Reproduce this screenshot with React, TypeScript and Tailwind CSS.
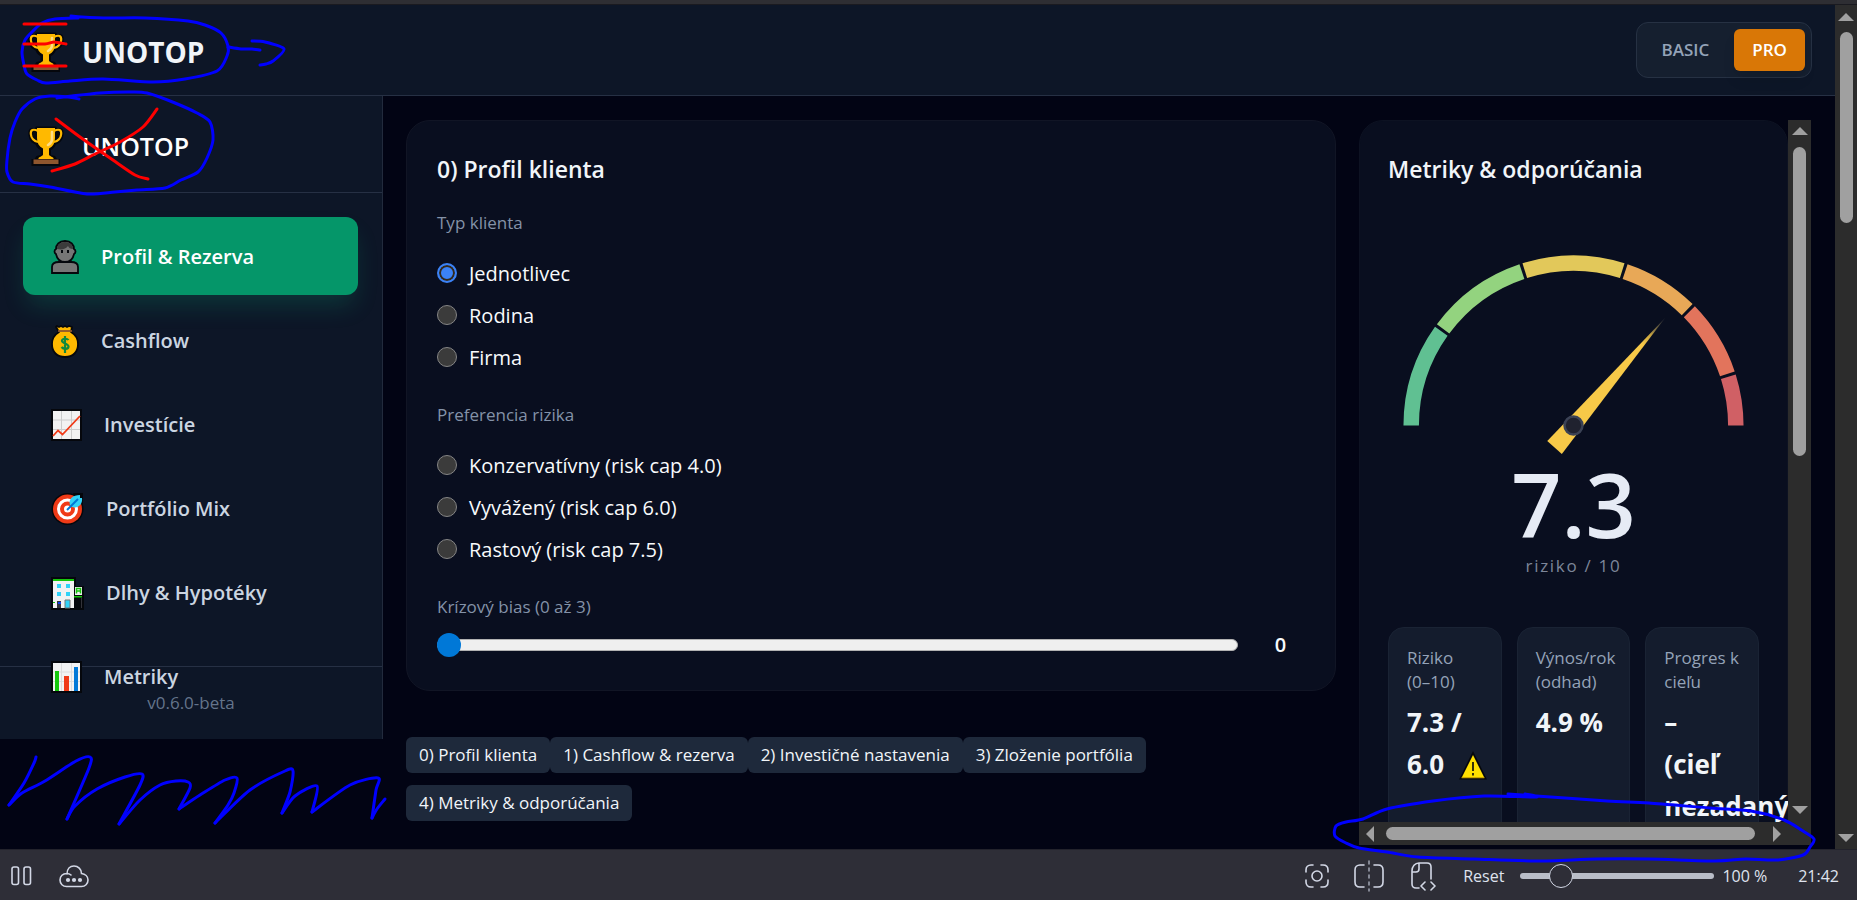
import { useState, type ReactNode } from "react";

/* ---------- emoji-style pictograms ---------- */

function Trophy() {
  return (
    <svg width="36" height="40" viewBox="0 0 36 40" aria-hidden="true" className="shrink-0">
      <path
        d="M8 .5h20l1 1.500h3c3 0 4 3 3.500 7-.5 5-3.500 8-7.500 9.500-1.500 3-3 4.500-5 5.500v5l4 1 2 3h3v7H3.500v-7h3l2-3 4-1v-5c-2-1-4-2.500-5-5.500C3.500 17 1 14 .5 9 0 5 1 2 4 2h3z"
        fill="#05070c"
      />
      <path d="M10 5C5 2.500 2.500 4 2.800 8c.3 4 3.200 7.500 7.200 8M26 5c5-2.500 7.500-1 7.200 3-.3 4-3.200 7.500-7.200 8" fill="none" stroke="#ffb900" strokeWidth="2.200" />
      <path d="M9 2h18v10c0 5-2 8.500-6 10.500v6c0 1.500 3 2 4.500 3.500V33h-15v-1c1.500-1.500 4.500-2 4.500-3.500v-6C11 20.500 9 17 9 12z" fill="#ffb900" />
      <path d="M24 6v7c0 3-1.500 4.500-4 6" fill="none" stroke="#ffdc83" strokeWidth="2.600" strokeLinecap="round" />
      <path d="M5.500 33.500h25V38h-25z" fill="#8e562e" />
    </svg>
  );
}

function Person() {
  return (
    <svg width="28" height="34" viewBox="0 0 28 34" aria-hidden="true" className="shrink-0">
      <path
        d="M1 33v-6c0-4 3-5 7-5h12c4 0 7 1 7 5v6z"
        fill="#767676"
        stroke="#05070c"
        strokeWidth="1.8"
      />
      <path
        d="M14 1C8 1 5 5 5 9c-2 1-2 4 0 5 1 5 4 8 9 8s8-3 9-8c2-1 2-4 0-5 0-4-3-8-9-8z"
        fill="#767676"
        stroke="#05070c"
        strokeWidth="1.8"
      />
      <path d="M6 9c0-4 3-7 8-7s8 3 8 7c-3 0-4-1-5-3-2 3-6 4-11 3z" fill="#3b3b3b" />
      <path d="M11 10v3M17 10v3" stroke="#05070c" strokeWidth="2" />
    </svg>
  );
}

function MoneyBag() {
  return (
    <svg width="28" height="34" viewBox="0 0 28 34" aria-hidden="true" className="shrink-0">
      <path
        d="M6 2l2 1 2-1 2 1 2-1 2 1 2-1 3 1-1 5c5 3 7 7 7 12 0 8-5 13-13 13S1 28 1 20C1 15 3 11 8 8L5 3z"
        fill="#ffb900"
        stroke="#05070c"
        strokeWidth="1.8"
        strokeLinejoin="round"
      />
      <path d="M7 7h14" stroke="#8e562e" strokeWidth="1.8" />
      <path
        d="M17.500 16c-1-1.500-6-2-6.500.5-.5 3 6.500 3 6.500 6s-5 3-7 .5M14 12v17"
        fill="none"
        stroke="#10893e"
        strokeWidth="2.2"
      />
    </svg>
  );
}

function LineChart() {
  return (
    <svg width="31" height="32" viewBox="0 0 31 32" aria-hidden="true" className="shrink-0">
      <path d="M0 0h31v32H0z" fill="#05070c" />
      <path d="M2 2h27v28H2z" fill="#f2f2f2" />
      <path d="M10.500 2v28M20.500 2v28M2 11h27M2 20.500h27" stroke="#cccccc" strokeWidth="1" />
      <path d="M2 27l5-5.500 4.500 4L29 7" fill="none" stroke="#f03a17" strokeWidth="1.8" />
    </svg>
  );
}

function Target() {
  return (
    <svg width="33" height="34" viewBox="0 0 33 34" aria-hidden="true" className="shrink-0">
      <circle cx="16.500" cy="17" r="16" fill="#05070c" />
      <path d="M22 1h10v11l-6 4z" fill="#05070c" />
      <circle cx="16.500" cy="17" r="14.500" fill="#f03a17" />
      <circle cx="16.500" cy="17" r="9" fill="none" stroke="#ffffff" strokeWidth="3" />
      <circle cx="16.500" cy="17" r="3.500" fill="#ffffff" />
      <path d="M19 13c-2-6 3-10 10-10v3h2c1 6-4 11-10 9z" fill="#31d2f7" />
      <path d="M16 18L27 7" stroke="#0078d7" strokeWidth="2" />
    </svg>
  );
}

function Bank() {
  return (
    <svg width="33" height="34" viewBox="0 0 33 34" aria-hidden="true" className="shrink-0">
      <path d="M0 1h25v9h8v24H0z" fill="#05070c" />
      <path d="M2 5h21v27H2z" fill="#f2f2f2" />
      <path d="M2 3h21v2H2z" fill="#16c60c" />
      <path d="M6 8h4v4H6zM15 8h4v4h-4zM6 16h4v4H6zM15 16h4v4h-4z" fill="#31d2f7" />
      <path d="M14 24h5v8h-5z" fill="#31d2f7" stroke="#767676" />
      <path d="M6 25h4v7H6z" fill="#33333a" />
      <path d="M7 26h3v2H7z" fill="#0c3fe8" />
      <path d="M2 26h2v1H2z" fill="#16c60c" />
      <path d="M24 11h7v8h-7z" fill="#f2f2f2" />
      <path d="M25.500 17.500v-5h4v5M25.500 15h4" fill="none" stroke="#16c60c" strokeWidth="1.5" />
      <path d="M23 20h8v1.500h-8z" fill="#16c60c" />
      <path d="M30.500 22v10" stroke="#33333a" strokeWidth="1" />
    </svg>
  );
}

function BarChart() {
  return (
    <svg width="31" height="32" viewBox="0 0 31 32" aria-hidden="true" className="shrink-0">
      <path d="M0 0h31v32H0z" fill="#05070c" />
      <path d="M2 2h27v28H2z" fill="#f2f2f2" />
      <path d="M10.500 2v28M20.500 2v28M2 11h27M2 20.500h27" stroke="#dcdcdc" strokeWidth="1" />
      <path d="M4 10h4v20H4z" fill="#16c60c" />
      <path d="M13 15h5v15h-5z" fill="#f03a17" />
      <path d="M23 6h4v24h-4z" fill="#0078d7" />
    </svg>
  );
}

function Warning() {
  return (
    <svg width="28" height="29" viewBox="0 0 28 29" role="img" aria-label="Varovanie" className="ml-2 inline-block align-[-6px]">
      <path d="M14 0L28 28.500H0z" fill="#05070c" />
      <path d="M14 4L25.500 27h-23z" fill="#ffe000" />
      <path d="M3 26h22l.5 1.200h-23z" fill="#c9a500" />
      <path d="M14 11v9M14 22v2.500" stroke="#05070c" strokeWidth="1.600" />
    </svg>
  );
}

/* ---------- scrollbars ---------- */

function Arrow({ dir }: { dir: "up" | "down" | "left" | "right" }) {
  const shapes = {
    up: "M0 8L8 0l8 8z",
    down: "M0 0h16L8 8z",
    left: "M8 0v16L0 8z",
    right: "M0 0l8 8-8 8z",
  };
  const vertical = dir === "up" || dir === "down";
  return (
    <svg width={vertical ? 16 : 8} height={vertical ? 8 : 16} aria-hidden="true" className="shrink-0">
      <path d={shapes[dir]} fill="#a0a0a0" />
    </svg>
  );
}

/* ---------- risk gauge ---------- */

const CX = 186;
const CY = 196;

function polar(r: number, fraction: number) {
  const a = Math.PI * (1 - fraction);
  return `${(CX + r * Math.cos(a)).toFixed(2)} ${(CY - r * Math.sin(a)).toFixed(2)}`;
}

const SEGMENTS = [
  { from: 0, to: 0.2, color: "#60c092" },
  { from: 0.2, to: 0.4, color: "#93d37f" },
  { from: 0.4, to: 0.6, color: "#e2c85a" },
  { from: 0.6, to: 0.75, color: "#e8a857" },
  { from: 0.75, to: 0.9, color: "#e2745c" },
  { from: 0.9, to: 1, color: "#d06065" },
];

function Gauge() {
  return (
    <svg viewBox="0 0 372 239" role="img" aria-label="Riziko 7.3 z 10" className="mt-[43px] w-full">
      <defs>
        <linearGradient id="needle" gradientUnits="userSpaceOnUse" x1={CX} y1={CY} x2={CX + 92} y2={CY - 108}>
          <stop offset="0.75" stopColor="#f7c948" />
          <stop offset="0.84" stopColor="#f7c948" stopOpacity="0.8" />
          <stop offset="1" stopColor="#8a8a80" stopOpacity="0.15" />
        </linearGradient>
      </defs>
      {SEGMENTS.map((s) => {
        const a = s.from === 0 ? 0 : s.from + 0.003;
        const b = s.to === 1 ? 1 : s.to - 0.003;
        return (
          <path
            key={s.from}
            d={`M${polar(170.5, a)}A170.500 170.500 0 0 1 ${polar(170.5, b)}L${polar(155, b)}A155 155 0 0 0 ${polar(155, a)}Z`}
            fill={s.color}
          />
        );
      })}
      <path
        d={`M${CX + 92} ${CY - 108}L${CX - 11.7} ${CY + 28.7}L${CX - 26.3} ${CY + 15.7}Z`}
        fill="url(#needle)"
      />
      <circle cx={CX} cy={CY} r="9" fill="#20222f" stroke="#3b4255" strokeWidth="2.5" />
    </svg>
  );
}

/* ---------- hand-drawn marks ---------- */

type Point = [number, number];

function smooth(points: Point[]) {
  let d = `M${points[0].join(" ")}`;
  for (let i = 0; i < points.length - 1; i++) {
    const p0 = points[i - 1] ?? points[i];
    const p1 = points[i];
    const p2 = points[i + 1];
    const p3 = points[i + 2] ?? p2;
    const c = [
      p1[0] + (p2[0] - p0[0]) / 7,
      p1[1] + (p2[1] - p0[1]) / 7,
      p2[0] - (p3[0] - p1[0]) / 7,
      p2[1] - (p3[1] - p1[1]) / 7,
    ].map((n) => n.toFixed(1));
    d += `C${c[0]} ${c[1]} ${c[2]} ${c[3]} ${p2[0]} ${p2[1]}`;
  }
  return d;
}

const BLUE: Point[][] = [
  [[78, 18], [55, 19], [42, 23], [33, 31], [25, 40], [22, 52], [24, 65], [27, 74], [37, 80], [46, 83], [70, 81], [103, 79], [153, 82], [185, 79], [217, 71], [227, 56], [228, 46], [221, 33], [205, 25], [188, 21], [145, 18], [110, 18], [82, 17], [71, 16]],
  [[228, 47], [241, 49], [252, 49], [260, 50]],
  [[252, 41], [265, 42], [284, 49], [273, 61], [266, 64], [260, 65]],
  [[79, 99], [68, 97], [50, 96], [35, 99], [22, 109], [15, 122], [10, 138], [7, 160], [7, 172], [13, 182], [30, 184], [50, 187], [87, 194], [115, 192], [137, 190], [165, 188], [181, 180], [198, 172], [207, 158], [213, 140], [210, 122], [197, 113], [175, 103], [147, 93], [128, 92], [100, 93], [72, 96], [57, 98]],
  [[36, 757], [34, 763], [24, 783], [9, 805]],
  [[9, 805], [22, 793], [45, 781], [76, 761], [90, 757], [89, 768], [67, 819]],
  [[67, 819], [75, 806], [97, 789], [125, 777], [142, 774], [140, 785], [119, 824]],
  [[119, 824], [140, 800], [160, 785], [176, 781], [188, 782], [190, 788], [179, 809]],
  [[179, 809], [200, 795], [225, 780], [237, 778], [234, 793], [228, 805], [215, 823]],
  [[215, 823], [250, 790], [285, 771], [293, 771], [290, 792], [282, 813]],
  [[282, 813], [295, 796], [317, 786], [312, 812]],
  [[312, 812], [350, 785], [378, 778], [376, 790], [372, 818]],
  [[372, 818], [377, 809], [385, 799]],
  [[1525, 794], [1536, 797], [1484, 796], [1433, 801], [1387, 809], [1363, 819], [1346, 822], [1336, 826], [1335, 836], [1346, 843], [1359, 848], [1387, 852], [1418, 857], [1474, 859], [1536, 861], [1597, 859], [1649, 859], [1715, 861], [1746, 859], [1777, 860], [1803, 855], [1810, 847], [1814, 839], [1803, 831], [1784, 820], [1751, 811], [1710, 808], [1649, 803], [1607, 801], [1536, 796], [1508, 794]],
];

const RED: Point[][] = [
  [[24, 24], [66, 24]],
  [[24, 44], [45, 44], [54, 42], [66, 44]],
  [[24, 66], [66, 66]],
  [[56, 119], [80, 137], [110, 158], [135, 175], [148, 179]],
  [[157, 109], [143, 127], [120, 142], [95, 154], [75, 164], [52, 171]],
];

function Marks() {
  return (
    <svg
      viewBox="0 0 1857 900"
      aria-hidden="true"
      className="pointer-events-none absolute inset-0 z-20 h-full w-full"
      fill="none"
      strokeWidth="3"
      strokeLinecap="round"
      strokeLinejoin="round"
    >
      {BLUE.map((p, i) => (
        <path key={i} d={smooth(p)} stroke="#0000ff" />
      ))}
      {RED.map((p, i) => (
        <path key={i} d={smooth(p)} stroke="#ff0000" />
      ))}
    </svg>
  );
}

/* ---------- page parts ---------- */

function Header() {
  return (
    <header className="flex h-[91px] shrink-0 items-center justify-between border-b border-[#263044] bg-[#0d1627] pr-[23px] pl-7">
      <div className="flex items-center gap-[18px] pt-1">
        <Trophy />
        <h1 className="text-[28px] leading-9 font-bold text-[#f1f5f9]">UNOTOP</h1>
      </div>
      <div className="flex gap-1.5 rounded-xl border border-[#263143] bg-[#151f2f] p-1.5">
        <button className="h-[42px] rounded-md px-[19px] text-[17px] font-semibold text-[#94a3b8]">BASIC</button>
        <button className="h-[42px] rounded-md bg-[#d97706] px-[18px] text-[17px] font-semibold text-white shadow-lg">
          PRO
        </button>
      </div>
    </header>
  );
}

const NAV: { label: string; icon: ReactNode }[] = [
  { label: "Profil & Rezerva", icon: <Person /> },
  { label: "Cashflow", icon: <MoneyBag /> },
  { label: "Investície", icon: <LineChart /> },
  { label: "Portfólio Mix", icon: <Target /> },
  { label: "Dlhy & Hypotéky", icon: <Bank /> },
  { label: "Metriky", icon: <BarChart /> },
];

function Sidebar() {
  return (
    <aside className="relative w-[383px] shrink-0 self-start border-r border-[#222b3d] bg-[#0d1627]">
      <div className="flex h-[97px] items-center gap-[18px] border-b border-[#263044] pt-1 pl-7">
        <Trophy />
        <span className="text-[25px] leading-9 font-semibold text-white">UNOTOP</span>
      </div>
      <nav className="relative z-10 flex flex-col gap-1.5 py-6 pr-6 pl-[23px]">
        {NAV.map((item, i) => (
          <button
            key={item.label}
            className={
              i === 0
                ? "flex h-[78px] items-center gap-[22px] rounded-xl bg-[#059669] pt-0.5 pl-7 text-left text-[20px] font-semibold text-white shadow-[0_14px_24px_-4px_rgba(16,185,129,0.2)]"
                : "flex h-[78px] items-center gap-[22px] rounded-xl pt-0.5 pl-7 text-left text-[20px] font-semibold text-[#cbd5e1]"
            }
          >
            {item.icon}
            {item.label}
          </button>
        ))}
      </nav>
      <div className="absolute inset-x-0 bottom-0 flex h-[73px] items-center justify-center border-t border-[#263044] text-[17px] text-[#64748b]">
        v0.6.0-beta
      </div>
    </aside>
  );
}

function RadioGroup(props: { name: string; legend: string; options: string[]; initial?: string }) {
  const [value, setValue] = useState(props.initial ?? "");
  return (
    <fieldset className="mt-[23px]">
      <legend className="text-[17px] leading-[26px] text-[#8492a8]">{props.legend}</legend>
      <div className="mt-[17px]">
        {props.options.map((o) => (
          <label key={o} className="flex h-[42px] items-center gap-3 text-[20px] text-[#f8fafc]">
            <input
              type="radio"
              name={props.name}
              checked={value === o}
              onChange={() => setValue(o)}
              className="mb-0.5 size-5 appearance-none rounded-full border border-[#858585] bg-[#3b3b3b] checked:border-2 checked:border-[#3b82f6] checked:bg-[#3b82f6] checked:shadow-[inset_0_0_0_2px_#33291b]"
            />
            {o}
          </label>
        ))}
      </div>
    </fieldset>
  );
}

const CHIPS = [
  "0) Profil klienta",
  "1) Cashflow & rezerva",
  "2) Investičné nastavenia",
  "3) Zloženie portfólia",
  "4) Metriky & odporúčania",
];

function ProfileColumn() {
  const [bias, setBias] = useState(0);
  return (
    <div className="min-w-0">
      <section className="rounded-3xl border border-[#111525] bg-[#090e1f] p-[30px]">
        <h2 className="text-[23px] leading-9 font-semibold text-[#f1f5f9]">0) Profil klienta</h2>
        <RadioGroup
          name="typ"
          legend="Typ klienta"
          options={["Jednotlivec", "Rodina", "Firma"]}
          initial="Jednotlivec"
        />
        <RadioGroup
          name="riziko"
          legend="Preferencia rizika"
          options={["Konzervatívny (risk cap 4.0)", "Vyvážený (risk cap 6.0)", "Rastový (risk cap 7.5)"]}
        />
        <label htmlFor="bias" className="mt-[23px] block text-[17px] leading-[26px] text-[#8492a8]">
          Krízový bias (0 až 3)
        </label>
        <div className="mt-2.5 flex h-[30px] items-center gap-[18px]">
          <input
            id="bias"
            type="range"
            min={0}
            max={3}
            value={bias}
            onChange={(e) => setBias(Number(e.target.value))}
            className="h-3 min-w-0 flex-1 appearance-none rounded-full border border-[#b2b2b2] bg-[#efefef] [&::-webkit-slider-thumb]:-ml-px [&::-webkit-slider-thumb]:size-6 [&::-webkit-slider-thumb]:appearance-none [&::-webkit-slider-thumb]:rounded-full [&::-webkit-slider-thumb]:bg-[#0078d7]"
          />
          <output htmlFor="bias" className="w-[49px] text-center text-[20px] font-semibold text-[#f8fafc]">
            {bias}
          </output>
        </div>
      </section>
      <div className="mt-[46px] flex flex-wrap gap-y-3">
        {CHIPS.map((c) => (
          <button key={c} className="h-9 rounded-md bg-[#1e293b] px-[13px] text-[17px] text-[#f1f5f9]">
            {c}
          </button>
        ))}
      </div>
    </div>
  );
}

function Stat({ label, children }: { label: ReactNode; children: ReactNode }) {
  return (
    <div className="rounded-2xl border border-[#1a2334] bg-[#141c2d] px-[18px] py-[18px]">
      <p className="text-[17px] leading-6 text-[#94a3b8]">{label}</p>
      <p className="mt-[7px] text-[26px] leading-[42px] font-bold text-[#f1f5f9]">{children}</p>
    </div>
  );
}

function Metrics() {
  return (
    <aside className="flex min-h-0 bg-[#2c2c2c]">
      <div className="flex min-w-0 flex-1 flex-col">
        <div className="min-h-0 flex-1 overflow-hidden bg-[#020414]">
          <section className="rounded-3xl border border-[#0d1222] bg-[#090e1f] px-7 pt-[30px] pb-10">
            <h2 className="text-[23px] leading-9 font-semibold text-[#f1f5f9]">Metriky &amp; odporúčania</h2>
            <Gauge />
            <p className="text-center text-[88px] leading-[72px] font-semibold text-[#e6ebf5]">7.3</p>
            <p className="mt-3 text-center text-[17px] leading-7 tracking-widest text-[#7d8699]">riziko / 10</p>
            <div className="mt-[47px] grid grid-cols-3 gap-[15px]">
              <Stat label={<>Riziko <span className="whitespace-nowrap">(0–10)</span></>}>
                7.3 /<br />
                <span className="whitespace-nowrap">6.0 <Warning /></span>
              </Stat>
              <Stat label="Výnos/rok (odhad)">
                <span className="whitespace-nowrap">4.9 %</span>
              </Stat>
              <Stat label="Progres k cieľu">
                –<br />
                (cieľ nezadaný)
              </Stat>
            </div>
          </section>
        </div>
        <div className="flex h-[23px] shrink-0 items-center pr-[7px] pl-[7px]">
          <Arrow dir="left" />
          <div className="mr-[18px] ml-3 h-[13px] flex-1 rounded-full bg-[#a0a0a0]" />
          <Arrow dir="right" />
        </div>
      </div>
      <div className="flex w-[23px] shrink-0 flex-col items-center pt-[7px] pb-[31px]">
        <Arrow dir="up" />
        <div className="mt-3 mb-auto h-[45%] w-[13px] rounded-full bg-[#a0a0a0]" />
        <Arrow dir="down" />
      </div>
    </aside>
  );
}

function StatusBar() {
  const [zoom, setZoom] = useState(17);
  return (
    <footer className="flex h-[51px] shrink-0 items-center border-t border-[#23232c] bg-[#2e2e37] pt-0.5 pr-[18px] pl-[11px] text-[16px] text-[#dfe3ee]">
      <button aria-label="Pozastaviť">
        <svg width="21" height="20" viewBox="0 0 21 20" fill="none" stroke="#d3d8e6" strokeWidth="1.600">
          <rect x="1" y="1" width="6.500" height="17.500" rx="2" />
          <rect x="13" y="1" width="6.500" height="17.500" rx="2" />
        </svg>
      </button>
      <button aria-label="Synchronizácia" className="ml-[27px]">
        <svg width="30" height="23" viewBox="0 0 30 23" fill="none" stroke="#d3d8e6" strokeWidth="1.600" strokeLinecap="round">
          <path d="M8 9C8 4 11 1 15 1c4 0 7.500 3 7.500 7.500C26 9 29 11.500 29 15c0 4-3 6.500-6.500 6.500h-15C4 21.500 1 19 1 15c0-4 3-6.500 6.500-6.500 2 0 3.500.5 4.500 1.500" />
          <g fill="#d3d8e6" stroke="none">
            <circle cx="9" cy="15" r="2.100" />
            <circle cx="15" cy="15" r="2.100" />
            <circle cx="21" cy="15" r="2.100" />
          </g>
        </svg>
      </button>
      <button aria-label="Snímka" className="ml-auto">
        <svg width="24" height="24" viewBox="0 0 24 24" fill="none" stroke="#d3d8e6" strokeWidth="1.600" strokeLinecap="round">
          <path d="M1 8V6c0-3 2-5 5-5h2M16 1h2c3 0 5 2 5 5v2M23 16v2c0 3-2 5-5 5h-2M8 23H6c-3 0-5-2-5-5v-2" />
          <circle cx="12" cy="12" r="5" />
        </svg>
      </button>
      <button aria-label="Rozdeliť" className="ml-[25px]">
        <svg width="30" height="32" viewBox="0 0 30 32" fill="none" stroke="#d3d8e6" strokeWidth="1.600" strokeLinecap="round">
          <path d="M10 5H6C3 5 1 7 1 10v12c0 3 2 5 5 5h4M20 5h4c3 0 5 2 5 5v12c0 3-2 5-5 5h-4" />
          <path d="M15 1v30" strokeDasharray="3 4" stroke="#9a9eac" />
        </svg>
      </button>
      <button aria-label="Kód stránky" className="ml-[27px]">
        <svg width="25" height="29" viewBox="0 0 25 29" fill="none" stroke="#d3d8e6" strokeWidth="1.600" strokeLinecap="round" strokeLinejoin="round">
          <path d="M8 26H5c-2.500 0-4-1.500-4-4V9c0-4.500 3-8 7-8h8c2.500 0 4 1.500 4 4v12M1 10h4c2 0 3-1 3-3V1" />
          <path d="M14 20l-4 4 4 4M20 20l4 4-4 4" />
        </svg>
      </button>
      <button className="ml-[27px]">Reset</button>
      <input
        type="range"
        aria-label="Priblíženie"
        value={zoom}
        onChange={(e) => setZoom(Number(e.target.value))}
        className="mr-2 ml-4 h-1.5 w-[194px] appearance-none rounded-full bg-[#b9bdc8] [&::-webkit-slider-thumb]:size-6 [&::-webkit-slider-thumb]:appearance-none [&::-webkit-slider-thumb]:rounded-full [&::-webkit-slider-thumb]:border [&::-webkit-slider-thumb]:border-[#d3d8e6] [&::-webkit-slider-thumb]:bg-[#2e2e37]"
      />
      <span>100 %</span>
      <time className="ml-[31px]">21:42</time>
    </footer>
  );
}

export default function App() {
  return (
    <div className="relative flex h-screen flex-col overflow-hidden bg-[#020414] font-['Open_Sans','Noto_Sans',sans-serif]">
      <div className="h-[5px] shrink-0 border-b border-[#1a1a20] bg-[#2e2e33]" />
      <div className="flex min-h-0 flex-1">
        <div className="flex min-w-0 flex-1 flex-col">
          <Header />
          <div className="flex min-h-0 flex-1">
            <Sidebar />
            <main className="grid min-h-0 min-w-0 flex-1 grid-cols-[minmax(0,1fr)_452px] grid-rows-[minmax(0,1fr)] gap-[23px] pt-6 pr-6 pb-1 pl-[23px]">
              <ProfileColumn />
              <Metrics />
            </main>
          </div>
        </div>
        <div className="flex w-[22px] shrink-0 flex-col items-center bg-[#2c2c2c] pt-2 pb-[7px]">
          <Arrow dir="up" />
          <div className="mt-[11px] mb-auto h-[23%] w-[13px] rounded-full bg-[#a0a0a0]" />
          <Arrow dir="down" />
        </div>
      </div>
      <StatusBar />
      <Marks />
    </div>
  );
}
